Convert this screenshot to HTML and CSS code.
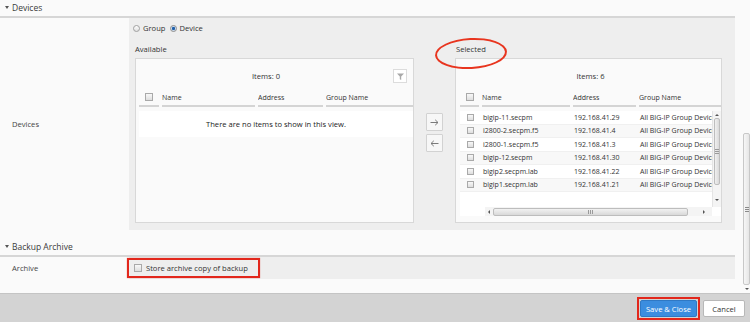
FILE: index.html
```html
<!DOCTYPE html>
<html>
<head>
<meta charset="utf-8">
<title>Devices</title>
<link rel="stylesheet" href="styles.css">
</head>
<body>
<div class="page">
  <div class="main">
    <div class="sec-head"><span class="tri"></span>Devices</div>
    <div class="row">
      <div class="label">Devices</div>
      <div class="field field-devices">
        <div class="radios">
          <span class="radio"></span><span class="rlabel">Group</span>
          <span class="radio checked"></span><span class="rlabel">Device</span>
        </div>
        <div class="lists">
          <div class="list-label">Available</div>
          <div></div>
          <div class="list-label sel-label">Selected<span class="ellipse"></span></div>

          <div class="panel avail">
            <div class="toolbar">
              <span class="items">Items: 0</span>
              <span class="filter-btn"><svg width="7" height="7" viewBox="0 0 7 7"><path d="M0 0.5H7L4.2 3.6V7L2.8 6.2V3.6Z" fill="#a8a8a8"/></svg></span>
            </div>
            <div class="thead cols-a">
              <div class="th th-cb"><span class="cb"></span></div>
              <div class="th">Name</div>
              <div class="th">Address</div>
              <div class="th">Group Name</div>
            </div>
            <div class="empty">There are no items to show in this view.</div>
          </div>

          <div class="arrows">
            <span class="arrow-btn"><svg width="9" height="7" viewBox="0 0 9 7"><path d="M0.5 3.5H8M5.2 0.8L8 3.5L5.2 6.2" fill="none" stroke="#7a7a7a" stroke-width="1"/></svg></span>
            <span class="arrow-btn"><svg width="9" height="7" viewBox="0 0 9 7"><path d="M8.5 3.5H1M3.8 0.8L1 3.5L3.8 6.2" fill="none" stroke="#7a7a7a" stroke-width="1"/></svg></span>
          </div>

          <div class="panel sel">
            <div class="toolbar"><span class="items">Items: 6</span></div>
            <div class="thead cols-s">
              <div class="th th-cb"><span class="cb"></span></div>
              <div class="th">Name</div>
              <div class="th">Address</div>
              <div class="th">Group Name</div>
            </div>
            <div class="tbody">
              <div class="rows-wrap">
                <div class="rows">
                  <div class="tr cols-s"><div class="td td-cb"><span class="cb cb-sm"></span></div><div class="td">bigip-11.secpm</div><div class="td">192.168.41.29</div><div class="td">All BIG-IP Group Devices</div></div>
                  <div class="tr cols-s"><div class="td td-cb"><span class="cb cb-sm"></span></div><div class="td">i2800-2.secpm.f5</div><div class="td">192.168.41.4</div><div class="td">All BIG-IP Group Devices</div></div>
                  <div class="tr cols-s"><div class="td td-cb"><span class="cb cb-sm"></span></div><div class="td">i2800-1.secpm.f5</div><div class="td">192.168.41.3</div><div class="td">All BIG-IP Group Devices</div></div>
                  <div class="tr cols-s"><div class="td td-cb"><span class="cb cb-sm"></span></div><div class="td">bigip-12.secpm</div><div class="td">192.168.41.30</div><div class="td">All BIG-IP Group Devices</div></div>
                  <div class="tr cols-s"><div class="td td-cb"><span class="cb cb-sm"></span></div><div class="td">bigip2.secpm.lab</div><div class="td">192.168.41.22</div><div class="td">All BIG-IP Group Devices</div></div>
                  <div class="tr cols-s"><div class="td td-cb"><span class="cb cb-sm"></span></div><div class="td">bigip1.secpm.lab</div><div class="td">192.168.41.21</div><div class="td">All BIG-IP Group Devices</div></div>
                </div>
                <div class="vscroll">
                  <span class="sb-btn sb-up"><i class="ar ar-up"></i></span>
                  <span class="vthumb"><svg width="4" height="5" viewBox="0 0 4 5"><path d="M0 0.5H4M0 2.5H4M0 4.5H4" stroke="#9a9a9a" stroke-width="1"/></svg></span>
                  <span class="sb-space"></span>
                  <span class="sb-btn sb-down"><i class="ar ar-down"></i></span>
                </div>
              </div>
              <div class="hscroll">
                <span class="hb hb-left"><i class="ar ar-left"></i></span>
                <span class="hthumb"><svg width="5" height="4" viewBox="0 0 5 4"><path d="M0.5 0V4M2.5 0V4M4.5 0V4" stroke="#9a9a9a" stroke-width="1"/></svg></span>
                <span class="sb-space"></span>
                <span class="hb hb-right"><i class="ar ar-right"></i></span>
              </div>
            </div>
          </div>
        </div>
      </div>
    </div>

    <div class="sec-head sec2"><span class="tri"></span>Backup Archive</div>
    <div class="row row-archive">
      <div class="label">Archive</div>
      <div class="field field-archive">
        <label class="hl-box"><span class="cb"></span><span class="cb-text">Store archive copy of backup</span></label>
      </div>
    </div>
  </div>
  <div class="rail">
    <div class="page-scroll">
      <span class="sb-space"></span>
      <span class="pthumb"><svg width="4" height="5" viewBox="0 0 4 5"><path d="M0 0.5H4M0 2.5H4M0 4.5H4" stroke="#8a8a8a" stroke-width="1"/></svg></span>
      <span class="pdown"><i class="ar ar-down"></i></span>
    </div>
  </div>
</div>
<div class="footer">
  <span class="save-wrap"><span class="btn btn-save">Save &amp; Close</span></span>
  <span class="btn btn-cancel">Cancel</span>
</div>
</body>
</html>
```

FILE: styles.css
```css
* { box-sizing: border-box; }

body {
  margin: 0;
  width: 750px;
  height: 322px;
  overflow: hidden;
  background: #fafafa;
  font-family: "Open Sans", "Liberation Sans", sans-serif;
  font-size: 7.6px;
  color: #333;
}

.page {
  display: flex;
  height: 293px;
}

.main {
  width: 735px;
  flex: none;
}

.rail {
  flex: 1;
  display: flex;
  justify-content: flex-end;
}

.page-scroll {
  width: 7px;
  display: flex;
  flex-direction: column;
}

.sb-space { flex: 1; }

.pthumb {
  height: 152px;
  border: 1px solid #c8c8c8;
  border-radius: 2px;
  background: linear-gradient(90deg, #f6f6f6, #e6e6e6);
  display: flex;
  align-items: center;
  justify-content: center;
}

.pdown {
  height: 8px;
  display: flex;
  align-items: center;
  justify-content: center;
}

/* section headers */
.sec-head {
  box-sizing: content-box;
  height: 16px;
  display: flex;
  align-items: center;
  padding: 0 0 1px 5px;
  height: 15px;
  border-bottom: 2px solid #d6d6d6;
  font-size: 8.5px;
  color: #3a3a3a;
}

.tri {
  width: 0;
  height: 0;
  border-left: 2.5px solid transparent;
  border-right: 2.5px solid transparent;
  border-top: 3px solid #555;
  margin-right: 3px;
}

.sec2 { margin-top: 9px; }

.row { display: flex; }

.label {
  width: 129px;
  flex: none;
  display: flex;
  align-items: center;
  padding-left: 12px;
  color: #444;
}

.field {
  flex: 1;
  background: #eeeeee;
}

.field-devices {
  padding: 3px 13px 7px 6px;
}

/* radios */
.radios {
  display: flex;
  align-items: center;
  height: 14px;
  margin-left: -2px;
}

.radio {
  width: 7px;
  height: 7px;
  border-radius: 50%;
  border: 1px solid #a0a0a0;
  background: linear-gradient(#fdfdfd, #e0e0e0);
  margin-right: 3px;
}

.radio.checked {
  border-color: #8c8c8c;
  background: radial-gradient(circle, #1f5ea8 0 1.3px, #bcd3ee 1.8px, #f2f2f2 3px);
}

.rlabel { margin-right: 4px; }

/* dual lists */
.lists {
  display: grid;
  grid-template-columns: 279px 17px 267px;
  grid-template-rows: auto 165px;
  column-gap: 12px;
}

.list-label {
  margin-top: 8px;
  line-height: 12px;
  margin-bottom: 3px;
}

.sel-label {
  position: relative;
  padding-left: 1px;
}

.ellipse {
  position: absolute;
  left: -20px;
  top: -5px;
  width: 72px;
  height: 31px;
  border: 2px solid #e8351f;
  border-radius: 50%;
  transform: rotate(-3deg);
}

.panel {
  border: 1px solid #d8d8d8;
  background: #fafafa;
  overflow: hidden;
}

.avail { padding-left: 3px; }
.sel { padding-left: 4px; }

.toolbar {
  height: 28px;
  padding-top: 6px;
  display: flex;
  align-items: center;
}

.items {
  flex: 1;
  text-align: center;
}

.filter-btn {
  width: 14px;
  height: 14px;
  border: 1px solid #dcdcdc;
  background: #fff;
  margin-right: 6px;
  display: flex;
  align-items: center;
  justify-content: center;
}

.thead {
  display: grid;
  column-gap: 3px;
}

.cols-a { grid-template-columns: 20px 93px 65px 1fr; }
.cols-s { grid-template-columns: 19px 88px 63px 1fr; column-gap: 3px; }

.th {
  height: 20px;
  padding-top: 2px;
  border-bottom: 2px solid #d4d4d4;
  display: flex;
  align-items: center;
  font-size: 7px;
  white-space: nowrap;
  overflow: hidden;
}

.th-cb { justify-content: center; }

.cb {
  display: inline-block;
  flex: none;
  width: 8px;
  height: 8px;
  border: 1px solid #a9a9a9;
  background: linear-gradient(#f8f8f8, #dedede);
}

.cb-sm {
  width: 7px;
  height: 7px;
}

.empty {
  margin-top: 4px;
  height: 26px;
  line-height: 26px;
  background: #fff;
  text-align: center;
  color: #222;
}

.tbody {
  margin-top: 4px;
  background: #fff;
}

.rows-wrap {
  display: flex;
  height: 96px;
}

.rows {
  flex: 1;
  overflow: hidden;
}

.tr {
  display: grid;
  height: 13.5px;
  align-items: center;
  font-size: 7px;
  border-bottom: 1px solid #f0f0f0;
}

.tr:nth-child(even) { background: #f8f8f8; }

.td {
  white-space: nowrap;
  overflow: hidden;
  padding-left: 1px;
}

.td-cb {
  display: flex;
  justify-content: center;
  padding-left: 2px;
}

.vscroll {
  width: 9px;
  display: flex;
  flex-direction: column;
  background: #f4f4f4;
  border-left: 1px solid #e4e4e4;
}

.sb-btn {
  display: flex;
  align-items: center;
  justify-content: center;
}

.sb-up { height: 7px; }
.sb-down { height: 14px; }

.vthumb {
  height: 67px;
  margin: 0 1px;
  border: 1px solid #bdbdbd;
  border-radius: 2px;
  background: linear-gradient(90deg, #f0f0f0, #d9d9d9);
  display: flex;
  align-items: center;
  justify-content: center;
}

.hscroll {
  height: 9px;
  margin: 0 9px 0 25px;
  display: flex;
  align-items: center;
  background: #f4f4f4;
}

.hb {
  height: 9px;
  display: flex;
  align-items: center;
  justify-content: center;
}

.hb-left { width: 8px; }
.hb-right { width: 16px; }

.hthumb {
  width: 195px;
  height: 8px;
  border: 1px solid #bdbdbd;
  border-radius: 2px;
  background: linear-gradient(#f2f2f2, #d9d9d9);
  display: flex;
  align-items: center;
  justify-content: center;
}

.ar {
  display: block;
  width: 0;
  height: 0;
}

.ar-up {
  border-left: 2px solid transparent;
  border-right: 2px solid transparent;
  border-bottom: 2px solid #555;
}

.ar-down {
  border-left: 2px solid transparent;
  border-right: 2px solid transparent;
  border-top: 2px solid #555;
}

.ar-left {
  border-top: 2px solid transparent;
  border-bottom: 2px solid transparent;
  border-right: 2px solid #555;
}

.ar-right {
  border-top: 2px solid transparent;
  border-bottom: 2px solid transparent;
  border-left: 2px solid #555;
}

.arrows {
  padding-top: 55px;
  display: flex;
  flex-direction: column;
  gap: 3px;
}

.arrow-btn {
  width: 17px;
  height: 18px;
  border: 1px solid #d2d2d2;
  border-radius: 1px;
  background: #f7f7f7;
  display: flex;
  align-items: center;
  justify-content: center;
}

/* archive */
.row-archive { height: 22px; }

.field-archive {
  display: flex;
  align-items: center;
}

.hl-box {
  margin-left: -2px;
  width: 133px;
  height: 20px;
  border: 2px solid #e2271c;
  box-shadow: 0 0 1px rgba(226, 39, 28, 0.6);
  display: flex;
  align-items: center;
  padding-left: 5px;
}

.cb-text { margin-left: 4px; }

/* footer */
.footer {
  height: 29px;
  background: #d3d3d3;
  border-top: 1px solid #c4c4c4;
  display: flex;
  justify-content: flex-end;
  align-items: center;
  padding: 1px 5px 0 0;
}

.save-wrap {
  border: 2px solid #e2271c;
  padding: 1px;
  display: flex;
}

.btn {
  height: 17px;
  display: flex;
  align-items: center;
  justify-content: center;
  border-radius: 2px;
}

.btn-save {
  width: 57px;
  background: #3b8ddf;
  border: 1px solid #2f78c4;
  color: #fff;
}

.btn-cancel {
  width: 42px;
  margin-left: 3px;
  background: #fff;
  border: 1px solid #b8b8b8;
  color: #333;
}
```
